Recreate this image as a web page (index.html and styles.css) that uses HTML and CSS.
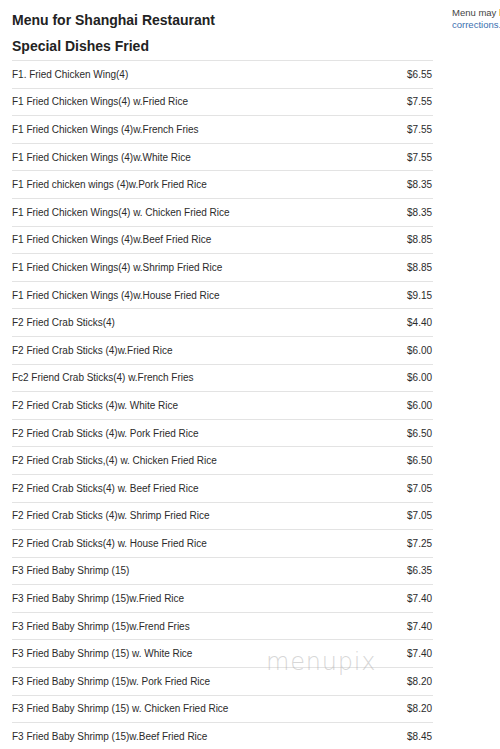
FILE: index.html
```html
<!DOCTYPE html>
<html>
<head>
<meta charset="utf-8">
<link rel="stylesheet" href="styles.css">
</head>
<body>
<div class="page">
  <main class="menu">
    <h1 class="title">Menu for Shanghai Restaurant</h1>
    <h2 class="section">Special Dishes Fried</h2>
    <ul class="items">
      <li class="row"><span>F1. Fried Chicken Wing(4)</span><span>$6.55</span></li>
      <li class="row"><span>F1 Fried Chicken Wings(4) w.Fried Rice</span><span>$7.55</span></li>
      <li class="row"><span>F1 Fried Chicken Wings (4)w.French Fries</span><span>$7.55</span></li>
      <li class="row"><span>F1 Fried Chicken Wings (4)w.White Rice</span><span>$7.55</span></li>
      <li class="row"><span>F1 Fried chicken wings (4)w.Pork Fried Rice</span><span>$8.35</span></li>
      <li class="row"><span>F1 Fried Chicken Wings(4) w. Chicken Fried Rice</span><span>$8.35</span></li>
      <li class="row"><span>F1 Fried Chicken Wings (4)w.Beef Fried Rice</span><span>$8.85</span></li>
      <li class="row"><span>F1 Fried Chicken Wings(4) w.Shrimp Fried Rice</span><span>$8.85</span></li>
      <li class="row"><span>F1 Fried Chicken Wings (4)w.House Fried Rice</span><span>$9.15</span></li>
      <li class="row"><span>F2 Fried Crab Sticks(4)</span><span>$4.40</span></li>
      <li class="row"><span>F2 Fried Crab Sticks (4)w.Fried Rice</span><span>$6.00</span></li>
      <li class="row"><span>Fc2 Friend Crab Sticks(4) w.French Fries</span><span>$6.00</span></li>
      <li class="row"><span>F2 Fried Crab Sticks (4)w. White Rice</span><span>$6.00</span></li>
      <li class="row"><span>F2 Fried Crab Sticks (4)w. Pork Fried Rice</span><span>$6.50</span></li>
      <li class="row"><span>F2 Fried Crab Sticks,(4) w. Chicken Fried Rice</span><span>$6.50</span></li>
      <li class="row"><span>F2 Fried Crab Sticks(4) w. Beef Fried Rice</span><span>$7.05</span></li>
      <li class="row"><span>F2 Fried Crab Sticks (4)w. Shrimp Fried Rice</span><span>$7.05</span></li>
      <li class="row"><span>F2 Fried Crab Sticks(4) w. House Fried Rice</span><span>$7.25</span></li>
      <li class="row"><span>F3 Fried Baby Shrimp (15)</span><span>$6.35</span></li>
      <li class="row"><span>F3 Fried Baby Shrimp (15)w.Fried Rice</span><span>$7.40</span></li>
      <li class="row"><span>F3 Fried Baby Shrimp (15)w.Frend Fries</span><span>$7.40</span></li>
      <li class="row"><span>F3 Fried Baby Shrimp (15) w. White Rice</span><span>$7.40</span></li>
      <li class="row"><span>F3 Fried Baby Shrimp (15)w. Pork Fried Rice</span><span>$8.20</span></li>
      <li class="row"><span>F3 Fried Baby Shrimp (15) w. Chicken Fried Rice</span><span>$8.20</span></li>
      <li class="row"><span>F3 Fried Baby Shrimp (15)w.Beef Fried Rice</span><span>$8.45</span></li>
    </ul>
    <div class="watermark">menupix</div>
  </main>
  <aside class="side">
    <p class="note"><span class="line">Menu may <a class="orange" href="#">be out of date.</a> <a class="blue" href="#">Submit</a></span><span class="line"><a class="blue" href="#">corrections.</a></span></p>
  </aside>
</div>
</body>
</html>
```

FILE: styles.css
```css
html, body {
  margin: 0;
  padding: 0;
  overflow: hidden;
  background: #fff;
}
body {
  font-family: "Liberation Sans", Arial, sans-serif;
  color: #333;
}
.page {
  display: flex;
  width: 700px;
  gap: 19px;
  padding: 0 0 0 12px;
}
.menu {
  position: relative;
  width: 421px;
  flex: none;
}
.title {
  margin: 0;
  padding-top: 12px;
  font-size: 14px;
  line-height: 17px;
  font-weight: bold;
  color: #222;
}
.section {
  margin: 0;
  padding-top: 9px;
  font-size: 14px;
  line-height: 17px;
  font-weight: bold;
  color: #222;
}
.items {
  list-style: none;
  margin: 5px 0 0;
  padding: 0;
}
.row {
  display: flex;
  justify-content: space-between;
  align-items: center;
  height: 26.6px;
  border-top: 1px solid #e3e3e3;
  font-size: 10px;
  letter-spacing: -0.02px;
  color: #2b2b2b;
  padding-right: 1px;
}
.watermark {
  position: absolute;
  left: 254px;
  top: 648px;
  font-family: "DejaVu Sans", sans-serif;
  font-weight: 200;
  font-size: 24px;
  letter-spacing: 0.8px;
  color: rgba(175,175,175,0.5);
}
.side {
  width: 200px;
  flex: none;
}
.note {
  margin: 7px 0 0;
  font-size: 9.5px;
  line-height: 12px;
  color: #444;
}
.line {
  display: block;
  white-space: nowrap;
}
.note a { text-decoration: none; }
.orange { color: #e8891c; }
.blue { color: #3a6fb0; }
```
